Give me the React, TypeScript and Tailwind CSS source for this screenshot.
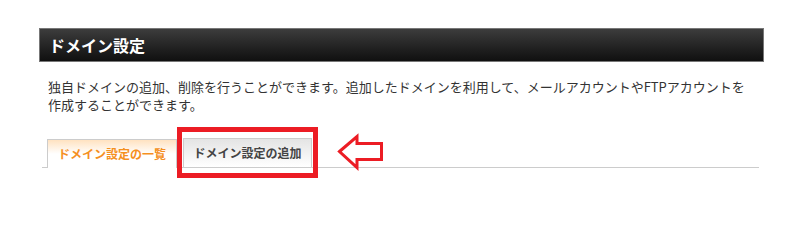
export default function App() {
  return (
    <div className="w-[809px] h-[222px] bg-white font-['Noto_Sans_CJK_JP','Noto_Sans',sans-serif]">
      <div className="ml-[39px] pt-[28px] w-[725px]">
        {/* Title bar */}
        <div className="h-[34px] border border-[#777] bg-gradient-to-b from-[#3d3d3d] to-[#101010] flex items-center pl-[9px]">
          <h1 className="text-white text-[16px] font-bold leading-none">ドメイン設定</h1>
        </div>

        {/* Description */}
        <p className="mt-[16px] pl-[9px] text-[13px] leading-[18px] text-[#333]">
          独自ドメインの追加、削除を行うことができます。追加したドメインを利用して、メールアカウントやFTPアカウントを
          <br />
          作成することができます。
        </p>

        {/* Tabs */}
        <div className="mt-[24px] ml-[3px] w-[717px] border-b border-[#ccc] flex items-end gap-[6px] pl-[5px]">
          <div className="-mb-px w-[130px] h-[29px] border border-b-0 border-[#ccc] bg-gradient-to-b from-[#ffe2c0] via-white to-white flex items-center justify-center">
            <span className="text-[12px] font-bold text-[#f5901e]">ドメイン設定の一覧</span>
          </div>
          <div className="relative">
            <div className="w-[129px] h-[29px] border border-b-0 border-[#ccc] bg-gradient-to-b from-[#e4e4e4] to-white flex items-center justify-center">
              <span className="text-[12px] font-bold text-[#444]">ドメイン設定の追加</span>
            </div>
            {/* Highlight box */}
            <div className="absolute -left-[6px] -right-[6px] -top-[11px] -bottom-[11px] border-[5px] border-[#ec1c24]" />
            {/* Arrow */}
            <svg
              className="absolute left-[153px] -top-[5px]"
              width="50"
              height="40"
              viewBox="0 0 50 40"
            >
              <polygon
                points="3.5,18.5 21,3.5 21,10.5 45.5,10.5 45.5,26.5 21,26.5 21,34.5"
                fill="none"
                stroke="#ec1c24"
                strokeWidth="3"
              />
            </svg>
          </div>
        </div>
      </div>
    </div>
  );
}
